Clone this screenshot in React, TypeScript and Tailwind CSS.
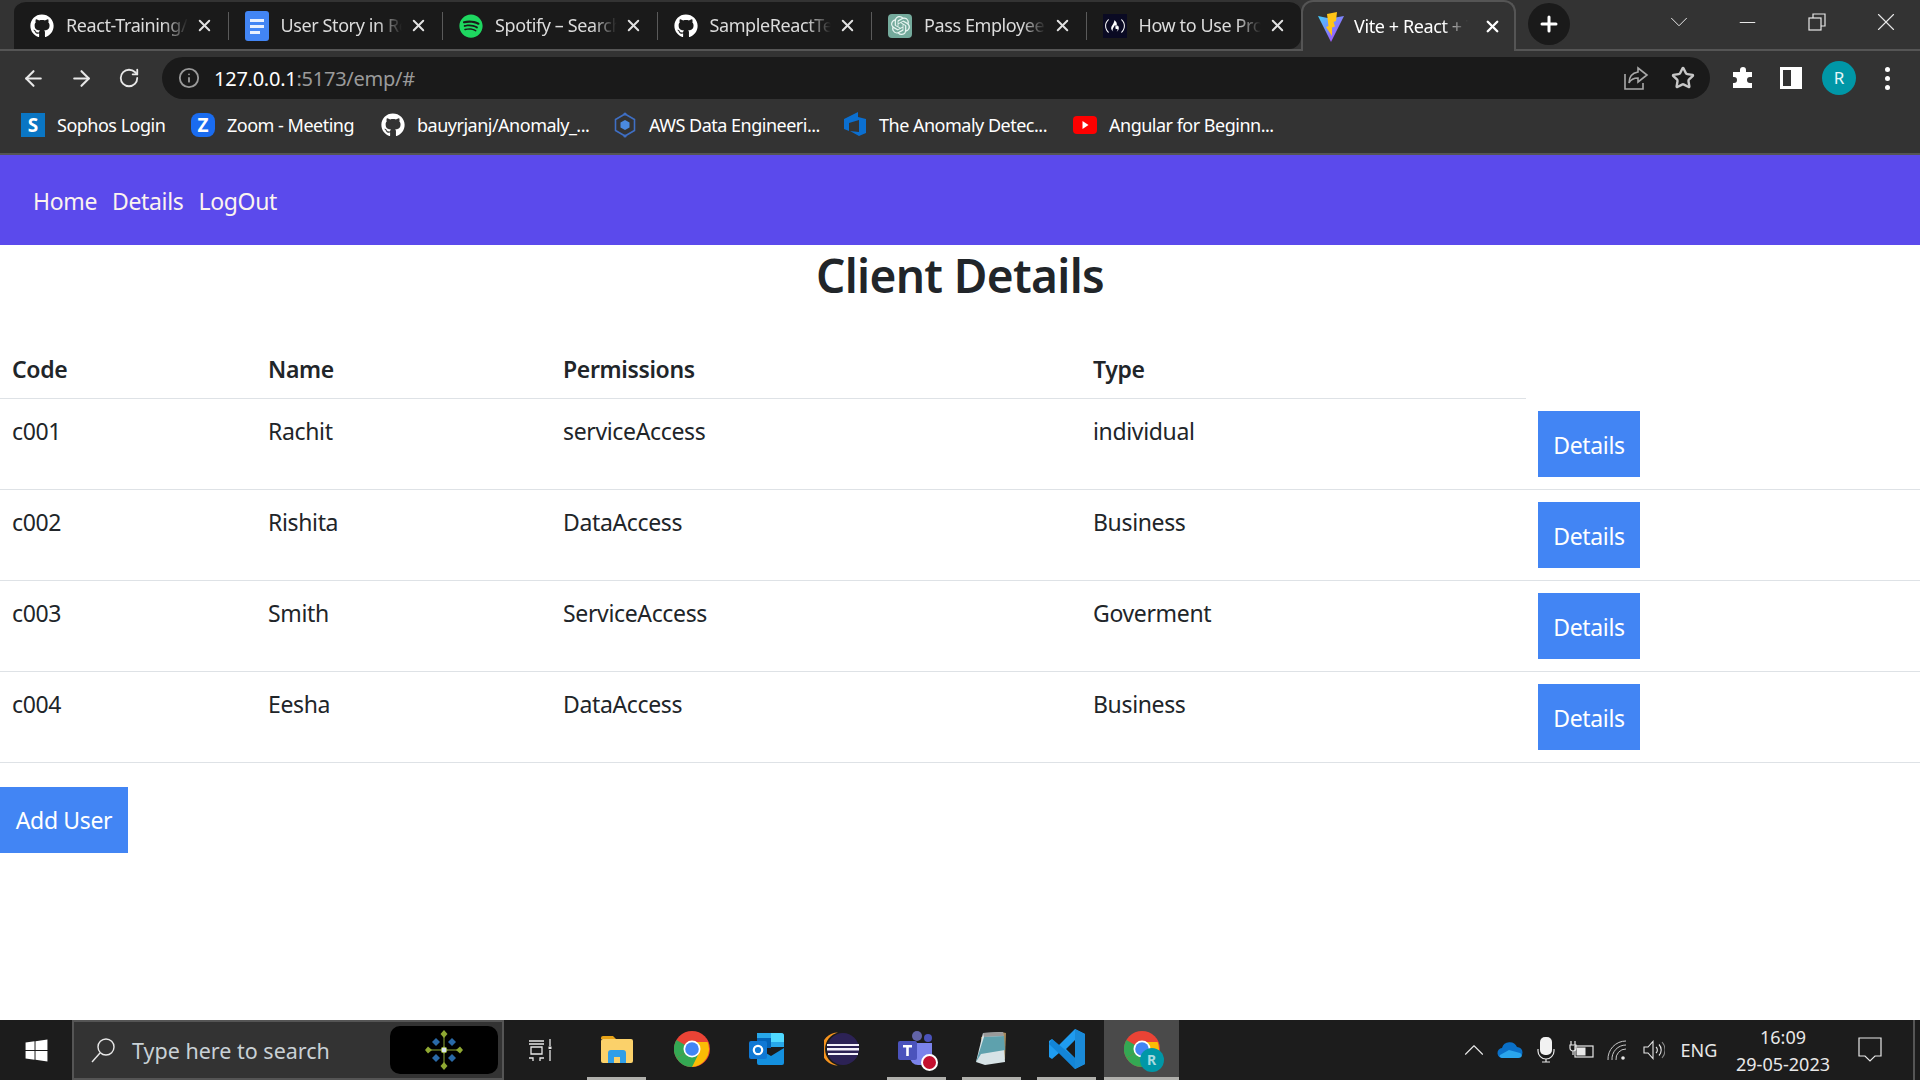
import { ArrowLeft, ArrowRight, ChevronDown, ChevronUp, Info, Minus, Plus, RotateCw, Star, X } from "lucide-react";
import { FaFreeCodeCamp, FaGithub, FaSpotify, FaWindows } from "react-icons/fa";
import { SiOpenai } from "react-icons/si";

const clients = [
  { code: "c001", name: "Rachit", permissions: "serviceAccess", type: "individual" },
  { code: "c002", name: "Rishita", permissions: "DataAccess", type: "Business" },
  { code: "c003", name: "Smith", permissions: "ServiceAccess", type: "Goverment" },
  { code: "c004", name: "Eesha", permissions: "DataAccess", type: "Business" },
];

function DocsIcon() {
  return (
    <svg width="24" height="30" viewBox="0 0 24 30">
      <rect width="24" height="30" rx="3" fill="#4285f4" />
      <path d="M5 8h14v3H5zM5 14h14v3H5zM5 20h10v3H5z" fill="#e8f0fe" />
    </svg>
  );
}

function ViteIcon() {
  return (
    <svg width="26" height="30" viewBox="0 0 26 30">
      <defs>
        <linearGradient id="viteBody" x1="0" y1="0" x2="1" y2="1">
          <stop offset="0" stopColor="#41d1ff" />
          <stop offset="1" stopColor="#bd34fe" />
        </linearGradient>
      </defs>
      <path d="M0 4 L12 6.5 L26 4 L13 30 Z" fill="url(#viteBody)" />
      <path d="M19 0 L9 2 L10.5 14 L8 15 L14 24 L14 15.5 L17 14.5 L15.5 10 L18 9 Z" fill="#ffc517" />
    </svg>
  );
}

function Tab({ icon, title, last }: { icon: React.ReactNode; title: string; last?: boolean }) {
  return (
    <div className={`flex h-full w-[214.5px] items-center bg-[#1a1a1a] pl-[16px] ${last ? "rounded-br-xl" : ""}`}>
      <div className="flex w-[24px] shrink-0 items-center justify-center">{icon}</div>
      <div className="ml-[12px] w-[122px] overflow-hidden whitespace-nowrap text-[18px] tracking-[-0.4px] text-[#dcdcdc] [mask-image:linear-gradient(to_right,black_80%,transparent)]">
        {title}
      </div>
      <X size={19} strokeWidth={2.5} className="ml-[7px] shrink-0 text-[#e2e2e2]" />
      {!last && <div className="ml-[14px] h-[28px] w-px shrink-0 bg-[#5a5a5a]" />}
    </div>
  );
}

function TabStrip() {
  return (
    <div className="flex h-[51px] items-stretch border-b-2 border-[#555] bg-[#333] pl-[14px]">
      <div className="flex h-[49px] overflow-hidden rounded-t-xl border-t-2 border-[#333]">
        <Tab icon={<FaGithub size={24} color="#fff" />} title="React-Training/" />
        <Tab icon={<DocsIcon />} title="User Story in React" />
        <Tab icon={<FaSpotify size={24} color="#1ed760" />} title="Spotify – Search" />
        <Tab icon={<FaGithub size={24} color="#fff" />} title="SampleReactTest" />
        <Tab
          icon={
            <div className="flex h-[24px] w-[24px] items-center justify-center rounded-[4px] bg-[#74aa9c]">
              <SiOpenai size={19} color="#e8f5f1" />
            </div>
          }
          title="Pass Employee"
        />
        <Tab
          icon={
            <div className="flex h-[24px] w-[24px] items-center justify-center bg-[#0a0a23]">
              <FaFreeCodeCamp size={20} color="#fff" />
            </div>
          }
          title="How to Use Props"
          last
        />
      </div>
      <div className="z-10 -mb-[2px] flex h-[51px] w-[215px] items-center rounded-t-xl border-x-2 border-t-2 border-[#555] bg-[#333] pl-[15px]">
        <ViteIcon />
        <div className="ml-[10px] w-[114px] overflow-hidden whitespace-nowrap text-[18px] tracking-[-0.4px] text-white [mask-image:linear-gradient(to_right,black_78%,transparent)]">
          Vite + React + TS
        </div>
        <X size={19} strokeWidth={3} className="ml-[15px] shrink-0 text-white" />
      </div>
      <div className="ml-[12px] mt-[3px] flex h-[42px] w-[42px] items-center justify-center rounded-full bg-[#1a1a1a]">
        <Plus size={24} strokeWidth={3} color="#fff" />
      </div>
      <div className="ml-auto flex items-start pt-[7px] text-[#e8e8e8]">
        <div className="flex h-[30px] w-[69px] items-center justify-center">
          <ChevronDown size={30} strokeWidth={0.8} />
        </div>
        <div className="flex h-[30px] w-[69px] items-center justify-center">
          <Minus size={25} strokeWidth={1.1} />
        </div>
        <div className="flex h-[30px] w-[69px] items-center justify-center">
          <svg width="18" height="18" viewBox="0 0 18 18" fill="none" stroke="#e8e8e8" strokeWidth="1.2">
            <rect x="1" y="5" width="12" height="12" />
            <path d="M5 5V1h12v12h-4" />
          </svg>
        </div>
        <div className="flex h-[30px] w-[69px] items-center justify-center">
          <X size={30} strokeWidth={0.9} />
        </div>
      </div>
    </div>
  );
}

function AddressBar() {
  return (
    <div className="flex h-[48px] items-start bg-[#333] pl-[9px] pt-[6px]">
      <div className="flex h-[42px] w-[48px] items-center justify-center">
        <ArrowLeft size={25} color="#e8e8e8" />
      </div>
      <div className="flex h-[42px] w-[48px] items-center justify-center">
        <ArrowRight size={25} color="#e8e8e8" />
      </div>
      <div className="flex h-[42px] w-[48px] items-center justify-center">
        <RotateCw size={22} color="#e8e8e8" />
      </div>
      <div className="ml-[9px] flex h-[42px] w-[1548px] items-center rounded-full bg-[#1a1a1a] pl-[16px] pr-[15px]">
        <Info size={22} color="#9a9a9a" />
        <div className="ml-[14px] pt-[1px] text-[20px] tracking-[-0.25px] text-[#9a9a9a]">
          <span className="text-white">127.0.0.1</span>:5173/emp/#
        </div>
        <svg className="ml-auto" width="26" height="26" viewBox="0 0 26 26" fill="none" stroke="#a8a8a8" strokeWidth="1.6">
          <path d="M2 9v15h18v-6" />
          <path d="M15 3l9 7-9 7v-4c-4 0-7 1-9 5 0-6 3-10 9-11z" />
        </svg>
        <Star size={24} color="#c8c8c8" strokeWidth={2.4} className="ml-[22px]" />
      </div>
      <div className="ml-[9px] flex h-[42px] w-[48px] items-center justify-center">
        <svg width="22" height="22" viewBox="0 0 22 22" fill="#fff">
          <path d="M8 3a3 3 0 0 1 6 0v2h6v5h-2a3 3 0 0 0 0 6h2v5H1v-5h1a3 3 0 0 0 0-6H1V5h7z" />
        </svg>
      </div>
      <div className="flex h-[42px] w-[48px] items-center justify-center">
        <div className="h-[22px] w-[22px] border-[3px] border-r-[11px] border-white bg-[#333]" />
      </div>
      <div className="flex h-[42px] w-[48px] items-center justify-center">
        <div className="flex h-[34px] w-[34px] items-center justify-center rounded-full bg-[#0097a7] text-[17px] text-[#e6f7f9]">R</div>
      </div>
      <div className="flex h-[42px] w-[48px] flex-col items-center justify-center gap-[4px]">
        <div className="h-[5px] w-[5px] rounded-full bg-white" />
        <div className="h-[5px] w-[5px] rounded-full bg-white" />
        <div className="h-[5px] w-[5px] rounded-full bg-white" />
      </div>
    </div>
  );
}

function Bookmark({ icon, label, width }: { icon: React.ReactNode; label: string; width: string }) {
  return (
    <div className={`flex items-center gap-[12px] ${width}`}>
      <div className="flex h-[24px] w-[24px] shrink-0 items-center justify-center">{icon}</div>
      <span className="whitespace-nowrap text-[18px] tracking-[-0.5px] text-white">{label}</span>
    </div>
  );
}

function BookmarksBar() {
  return (
    <div className="flex h-[56px] items-center border-b-2 border-[#555] bg-[#333] pb-[2px] pl-[21px]">
      <Bookmark
        width="w-[170px]"
        label="Sophos Login"
        icon={<div className="flex h-[24px] w-[24px] items-center justify-center bg-[#0a76c4] text-[19px] font-bold text-white">S</div>}
      />
      <Bookmark
        width="w-[190px]"
        label="Zoom - Meeting"
        icon={<div className="flex h-[24px] w-[24px] items-center justify-center rounded-[8px] bg-[#1a6cf0] text-[19px] font-bold text-white">Z</div>}
      />
      <Bookmark width="w-[232px]" label="bauyrjanj/Anomaly_..." icon={<FaGithub size={24} color="#fff" />} />
      <Bookmark
        width="w-[230px]"
        label="AWS Data Engineeri..."
        icon={
          <svg width="24" height="26" viewBox="0 0 24 26" fill="none">
            <path d="M12 2l9.5 5.5v11L12 24l-9.5-5.5v-11z" stroke="#3f6fc4" strokeWidth="1.6" />
            <path d="M12 8l4.5 2.5v5L12 18l-4.5-2.5v-5z" fill="#4a8ae0" />
            <circle cx="12" cy="2" r="1.6" fill="#3f6fc4" />
            <circle cx="12" cy="24" r="1.6" fill="#3f6fc4" />
          </svg>
        }
      />
      <Bookmark
        width="w-[230px]"
        label="The Anomaly Detec..."
        icon={
          <svg width="24" height="28" viewBox="0 0 24 28">
            <path d="M1 8L15 1v5l8 2v14l-7 3-9-5 9 1V9L6 12v8l-5-2z" fill="#0b6fd0" />
          </svg>
        }
      />
      <Bookmark
        width="w-[220px]"
        label="Angular for Beginn..."
        icon={
          <svg width="24" height="18" viewBox="0 0 24 18">
            <rect width="24" height="18" rx="4" fill="#f00" />
            <path d="M9.5 5l6 4-6 4z" fill="#fff" />
          </svg>
        }
      />
    </div>
  );
}

function NavBar() {
  return (
    <nav className="flex h-[90px] items-center gap-[15px] bg-[#5b4aec] pl-[33px] pt-[2px] text-[23px] tracking-[-0.35px] text-[#fbf3ef]">
      <a href="#">Home</a>
      <a href="#">Details</a>
      <a href="#">LogOut</a>
    </nav>
  );
}

function ClientTable() {
  return (
    <table className="mt-[31px] w-full table-fixed text-left text-[23px] leading-[36px] tracking-[-0.35px] text-[#212529]">
      <colgroup>
        <col className="w-[256px]" />
        <col className="w-[295px]" />
        <col className="w-[530px]" />
        <col className="w-[445px]" />
        <col />
      </colgroup>
      <thead>
        <tr>
          <th className="border-b border-[#dee2e6] px-[12px] pb-[11px] pt-[13px] font-semibold">Code</th>
          <th className="border-b border-[#dee2e6] px-[12px] pb-[11px] pt-[13px] font-semibold">Name</th>
          <th className="border-b border-[#dee2e6] px-[12px] pb-[11px] pt-[13px] font-semibold">Permissions</th>
          <th className="border-b border-[#dee2e6] px-[12px] pb-[11px] pt-[13px] font-semibold">Type</th>
        </tr>
      </thead>
      <tbody>
        {clients.map((c) => (
          <tr key={c.code} className="border-b border-[#dee2e6]">
            <td className="px-[12px] pb-[12px] pt-[14px] align-top">{c.code}</td>
            <td className="px-[12px] pb-[12px] pt-[14px] align-top">{c.name}</td>
            <td className="px-[12px] pb-[12px] pt-[14px] align-top">{c.permissions}</td>
            <td className="px-[12px] pb-[12px] pt-[14px] align-top">{c.type}</td>
            <td className="p-[12px] align-top">
              <button className="block h-[66px] w-[102px] bg-[#4285f4] pt-[3px] text-white">Details</button>
            </td>
          </tr>
        ))}
      </tbody>
    </table>
  );
}

function ChromeIcon({ size }: { size: number }) {
  return (
    <svg width={size} height={size} viewBox="0 0 36 36">
      <circle cx="18" cy="18" r="18" fill="#ea4335" />
      <path d="M18 18L2.4 27A18 18 0 0 1 2.4 9z" fill="#34a853" />
      <path d="M18 18L2.4 27A18 18 0 0 0 18 36l9-9z" fill="#34a853" />
      <path d="M18 11h15.6A18 18 0 0 1 18 36l7-14z" fill="#fbbc05" />
      <circle cx="18" cy="18" r="8.5" fill="#fff" />
      <circle cx="18" cy="18" r="6.8" fill="#4285f4" />
    </svg>
  );
}

function AppSlot({ children, line, active }: { children: React.ReactNode; line?: boolean; active?: boolean }) {
  return (
    <div className={`flex h-full w-[75px] flex-col ${active ? "bg-[#4a4a4a]" : ""}`}>
      <div className="flex flex-1 items-center justify-center">{children}</div>
      <div className={`h-[3px] ${active ? "bg-[#b0b0ac]" : line ? "mx-[8px] bg-[#b0b0ac]" : ""}`} />
    </div>
  );
}

function TrayBox({ children }: { children: React.ReactNode }) {
  return <div className="flex h-full w-[36px] items-center justify-center">{children}</div>;
}

function Taskbar() {
  return (
    <div className="flex h-[60px] items-stretch bg-[#1c1c1c]">
      <div className="flex w-[72px] items-center justify-center">
        <FaWindows size={25} color="#fff" />
      </div>
      <div className="flex w-[432px] items-center border-2 border-[#555] bg-[#333] pl-[16px]">
        <svg width="26" height="26" viewBox="0 0 26 26" fill="none" stroke="#e8e8e8" strokeWidth="1.4">
          <circle cx="16" cy="10" r="8" />
          <path d="M10 16L2 25" />
        </svg>
        <span className="ml-[16px] pt-[2px] text-[21.5px] text-[#c9d1d6]">Type here to search</span>
        <div className="ml-auto mr-[4px] flex h-[48px] w-[108px] items-center justify-center rounded-[10px] bg-black">
          <svg width="38" height="42" viewBox="0 0 38 42">
            <path d="M19 21V3M19 21V39M19 21H3M19 21H35" stroke="#8fa832" strokeWidth="1" />
            <path d="M19 1l3.5 4-3.5 4-3.5-4zM19 33l3.5 4-3.5 4-3.5-4zM3 17.5l4 3.5-4 3.5-3-3.5zM35 17.5l3 3.5-3 3.5-4-3.5z" fill="#8fa832" />
            <path d="M11 9l4 4-4 4-4-4zM27 9l4 4-4 4-4-4zM11 25l4 4-4 4-4-4zM27 25l4 4-4 4-4-4z" fill="#2a6aa8" />
            <circle cx="19" cy="21" r="3" fill="#d8e4ee" stroke="#8fa832" />
          </svg>
        </div>
      </div>
      <div className="flex w-[75px] items-center justify-center pr-[3px]">
        <svg width="24" height="24" viewBox="0 0 24 24" fill="none" stroke="#e8e8e8" strokeWidth="1.3">
          <path d="M1 3h15M1 6h15M3 9h11v7H3zM1 20h4v3M16 20h-4v3M22 1v7M22 12v11" />
          <rect x="20.5" y="8.5" width="3" height="2.5" fill="#e8e8e8" stroke="none" />
        </svg>
      </div>
      <AppSlot line>
        <svg width="32" height="28" viewBox="0 0 32 28">
          <path d="M0 3a2 2 0 0 1 2-2h10l3 3h-15z" fill="#e8a317" />
          <rect y="4" width="32" height="24" rx="2" fill="#fbd16a" />
          <path d="M7 28v-10a3 3 0 0 1 3-3h12a3 3 0 0 1 3 3v10h-6v-6h-6v6z" fill="#2f9ee8" />
        </svg>
      </AppSlot>
      <AppSlot>
        <ChromeIcon size={36} />
      </AppSlot>
      <AppSlot>
        <svg width="36" height="34" viewBox="0 0 36 34">
          <path d="M8 1h24a3 3 0 0 1 3 3v11H8z" fill="#28a8ea" />
          <path d="M22 1h10a3 3 0 0 1 3 3v6H22z" fill="#50d9ff" />
          <path d="M8 6h14v10H8z" fill="#0364b8" />
          <path d="M8 16l14 8 13-8v15a2 2 0 0 1-2 2H10a2 2 0 0 1-2-2z" fill="#1490df" />
          <rect y="9" width="18" height="18" rx="2" fill="#0f78d4" />
          <circle cx="9" cy="18" r="4.2" fill="none" stroke="#fff" strokeWidth="2.2" />
        </svg>
      </AppSlot>
      <AppSlot>
        <svg width="36" height="36" viewBox="0 0 36 36">
          <circle cx="19" cy="18" r="16" fill="#2c2255" />
          <path d="M14 1.5A17 17 0 0 0 14 34.5 A16 16 0 0 1 14 1.5z" fill="#f7941e" />
          <path d="M3 13h32v2H3zM3 17h32v2.5H3zM4 22h30v2H4z" fill="#f5f2fa" />
        </svg>
      </AppSlot>
      <AppSlot line>
        <div className="relative h-[38px] w-[38px]">
          <svg width="38" height="38" viewBox="0 0 38 38">
            <circle cx="19" cy="6" r="5" fill="#6264a7" />
            <circle cx="30" cy="8" r="4" fill="#4b53bc" />
            <path d="M12 13h22v14a8 8 0 0 1-8 8h-6a8 8 0 0 1-8-8z" fill="#7b83eb" />
            <rect y="11" width="19" height="19" rx="2" fill="#4b53bc" />
            <path d="M5 15h9v2.4h-3.2V26H8.2v-8.6H5z" fill="#fff" />
          </svg>
          <div className="absolute -bottom-[3px] -right-[2px] h-[17px] w-[17px] rounded-full border-2 border-white bg-[#c4102f]" />
        </div>
      </AppSlot>
      <AppSlot line>
        <svg width="34" height="36" viewBox="0 0 34 36">
          <path d="M6 6l20-5 5 1-1 26-22 2z" fill="#a5895a" />
          <path d="M8 2l20-1 2 30-20 3-9-3z" fill="#d7e3e6" />
          <path d="M8 2l20-1 1 4-20 1z" fill="#9a9a9a" />
          <path d="M9 6l20-1 1 14-24 4-5 8z" fill="#5ea1ad" />
        </svg>
      </AppSlot>
      <AppSlot line>
        <svg width="36" height="42" viewBox="0 0 36 42">
          <path d="M26 1l10 5v30l-10 5L10 25 3 31 0 29V13l3-2 7 6zM26 12l-9 9 9 9z" fill="#1f9cf0" />
          <path d="M26 1l10 5v30l-10 5z" fill="#1a8ad8" />
          <path d="M3 11L26 30v11L0 16z" fill="#0c76c7" opacity="0.6" />
        </svg>
      </AppSlot>
      <AppSlot active>
        <div className="relative h-[36px] w-[36px]">
          <ChromeIcon size={36} />
          <div className="absolute -bottom-[5px] -right-[4px] flex h-[24px] w-[24px] items-center justify-center rounded-full bg-[#0097a7] text-[14px] font-bold text-[#a9dbe0]">R</div>
        </div>
      </AppSlot>

      <div className="ml-auto flex items-stretch text-[#e8e8e8]">
        <TrayBox>
          <ChevronUp size={34} strokeWidth={0.8} />
        </TrayBox>
        <TrayBox>
          <svg width="26" height="18" viewBox="0 0 26 18">
            <path d="M6 17a5 5 0 0 1-1-10 8 8 0 0 1 15-1 5.5 5.5 0 0 1 0 11z" fill="#0a70c8" />
            <path d="M6 17c-3 0-4-2-3-3l9-5 11 3c3 2 2 5-2 5z" fill="#2aa5ec" />
          </svg>
        </TrayBox>
        <TrayBox>
          <svg width="18" height="26" viewBox="0 0 18 26" fill="none">
            <rect x="3" y="0" width="12" height="18" rx="5" fill="#f2f2f2" />
            <path d="M1 12v2a8 8 0 0 0 16 0v-2M9 22v3M5 25h8" stroke="#e8e8e8" strokeWidth="1.2" />
          </svg>
        </TrayBox>
        <TrayBox>
          <svg width="26" height="20" viewBox="0 0 26 20" fill="none" stroke="#e8e8e8" strokeWidth="1.2">
            <rect x="6" y="6" width="18" height="11" />
            <rect x="7.5" y="7.5" width="9" height="8" fill="#e8e8e8" stroke="none" />
            <path d="M2 1v4M6 1v4M1 5h6v3a3 3 0 0 1-6 0zM4 11v4" />
          </svg>
        </TrayBox>
        <TrayBox>
          <svg width="22" height="22" viewBox="0 0 22 22" fill="none" stroke="#c8c8c8" strokeWidth="1">
            <path d="M1 21A18 18 0 0 1 19 2M5 21A14 14 0 0 1 19 6M9 21A10 10 0 0 1 19 10" />
            <circle cx="16" cy="19" r="1.8" fill="#e8e8e8" stroke="none" />
          </svg>
        </TrayBox>
        <TrayBox>
          <svg width="22" height="20" viewBox="0 0 22 20" fill="none" stroke="#e8e8e8" strokeWidth="1.1">
            <path d="M1 7h4l5-5.5v17L5 13H1z" />
            <path d="M13 7a4 4 0 0 1 0 6M16 4.5a8 8 0 0 1 0 11" />
            <path d="M19 2a12 12 0 0 1 0 16" stroke="#888" />
          </svg>
        </TrayBox>
        <div className="flex w-[54px] items-center justify-center text-[18px]">ENG</div>
        <div className="flex w-[114px] flex-col items-center justify-center gap-[5px] text-[18px] leading-[22px]">
          <span>16:09</span>
          <span>29-05-2023</span>
        </div>
        <div className="flex w-[60px] items-center justify-center">
          <svg width="24" height="26" viewBox="0 0 24 26" fill="none" stroke="#e8e8e8" strokeWidth="1.2">
            <path d="M1 1h22v18h-6l-5 5-5-5H1z" />
          </svg>
        </div>
        <div className="ml-[13px] mr-[5px] w-[2px] bg-[#555]" />
      </div>
    </div>
  );
}

export default function App() {
  return (
    <div className="flex h-screen w-full flex-col overflow-hidden bg-white font-['Noto_Sans',sans-serif]">
      <TabStrip />
      <AddressBar />
      <BookmarksBar />
      <NavBar />
      <main className="flex-1">
        <h1 className="h-[62px] text-center text-[46px] font-semibold leading-[60px] tracking-[-0.65px] text-[#212529]">Client Details</h1>
        <ClientTable />
        <button className="mt-[24px] block h-[66px] w-[128px] bg-[#4285f4] pt-[2px] text-[23px] tracking-[-0.35px] text-white">Add User</button>
      </main>
      <Taskbar />
    </div>
  );
}
